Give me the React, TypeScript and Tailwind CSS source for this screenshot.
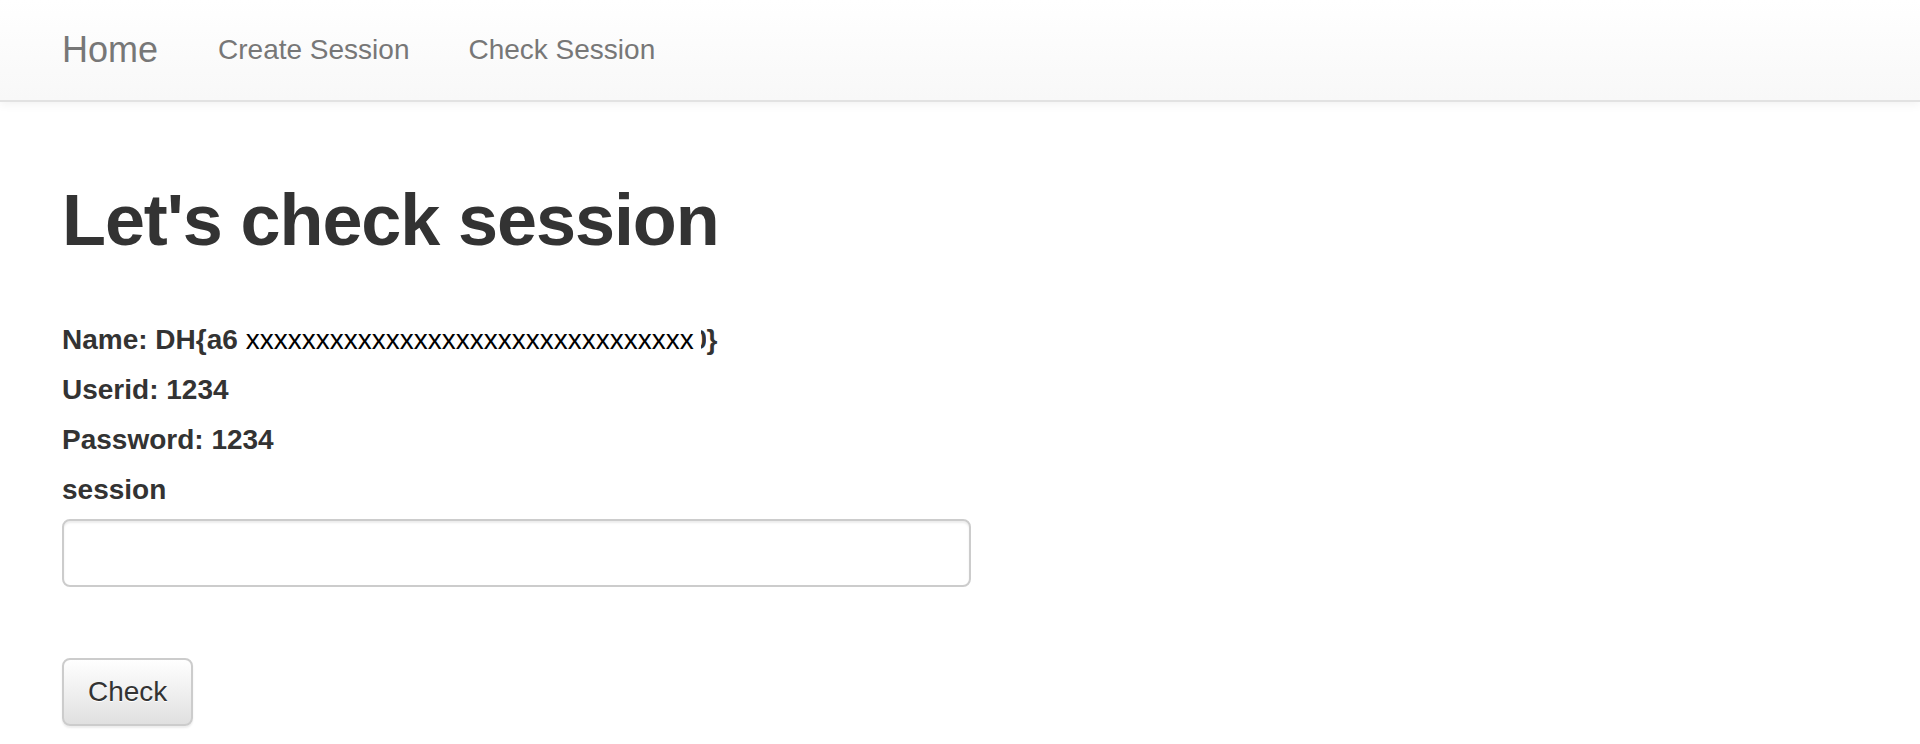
import React from "react";

export default function App() {
  const xs = "x".repeat(32);
  return (
    <div className="min-h-screen bg-white font-['Liberation_Sans',Arial,sans-serif] text-[#333]">
      <nav className="h-[102px] border-b-2 border-[#e2e2e2] bg-gradient-to-b from-white to-[#f8f8f8] shadow-[0_2px_10px_rgba(0,0,0,0.06)] flex items-start">
        <a className="pl-[62px] pr-[30px] pt-[30px] text-[36px] leading-[40px] text-[#777]">Home</a>
        <a className="px-[30px] pt-[30px] text-[28px] leading-[40px] text-[#777]">Create Session</a>
        <a className="px-[29px] pt-[30px] text-[28px] leading-[40px] text-[#777]">Check Session</a>
      </nav>
      <main className="pl-[62px]">
        <h1 className="mt-[79px] text-[72px] leading-[79px] font-bold tracking-[-1.1px] text-[#333]">
          Let's check session
        </h1>
        <div className="mt-[60px] flex flex-col items-start">
          <div className="text-[28px] leading-[40px] font-bold mb-[10px] whitespace-nowrap">
            Name: DH{"{"}a6{" "}
            <span className="font-normal text-black">{xs}</span>{" "}
            <span className="inline-block align-top w-[5px] overflow-hidden">
              <span className="inline-block -ml-[10px]">0</span>
            </span>
            <span>{"}"}</span>
          </div>
          <div className="text-[28px] leading-[40px] font-bold mb-[10px]">Userid: 1234</div>
          <div className="text-[28px] leading-[40px] font-bold mb-[10px]">Password: 1234</div>
          <label className="text-[28px] leading-[40px] font-bold mb-[9px]">session</label>
          <input
            type="text"
            className="w-[909px] h-[68px] border-2 border-[#ccc] rounded-[8px] bg-white shadow-[inset_0_2px_2px_rgba(0,0,0,0.075)] px-[24px] text-[28px] outline-none"
          />
          <button className="mt-[71px] h-[68px] px-[24px] border-2 border-[#ccc] rounded-[8px] bg-gradient-to-b from-white to-[#e0e0e0] text-[28px] text-[#333] shadow-[0_2px_2px_rgba(0,0,0,0.075)] [text-shadow:0_1px_0_#fff]">
            Check
          </button>
        </div>
      </main>
    </div>
  );
}
